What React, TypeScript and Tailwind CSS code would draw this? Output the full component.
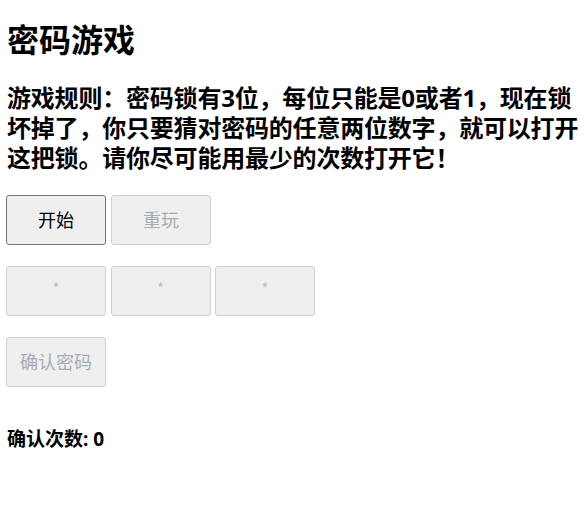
import { useState } from "react";

const font = "font-['Segoe_UI','Noto_Sans','Noto_Sans_CJK_SC',sans-serif]";

const btnBase =
  "w-[100px] h-[50px] rounded-[3px] border bg-[#efefef] text-[18px] leading-none flex items-center justify-center";

export default function App() {
  const [started, setStarted] = useState(false);
  const [count, setCount] = useState(0);

  return (
    <div className={`${font} text-black bg-white min-h-[523px] pl-[7px] pr-[2px] pt-[21px]`}>
      <h1 className="text-[32px] font-bold leading-[38px]">密码游戏</h1>
      <p className="mt-[24px] text-[24px] font-bold leading-[30px] tracking-[-0.2px]">
        游戏规则：密码锁有3位，每位只能是0或者1，现在锁坏掉了，你只要猜对密码的任意两位数字，就可以打开这把锁。请你尽可能用最少的次数打开它！
      </p>

      <div className="mt-[22px] -ml-px flex gap-[5px]">
        <button
          onClick={() => setStarted(true)}
          className={`${btnBase} border-[#767676] text-black`}
        >
          开始
        </button>
        <button disabled={!started} className={`${btnBase} border-[#d0d0d0] text-[#a8acb4]`}>
          重玩
        </button>
      </div>

      <div className="mt-[21px] -ml-px flex gap-[4.5px]">
        {[0, 1, 2].map((i) => (
          <button
            key={i}
            disabled
            className={`${btnBase} border-[#d0d0d0] text-[#b0b4bc] !text-[10px] pb-[10px]`}
          >
            *
          </button>
        ))}
      </div>

      <div className="mt-[21px] -ml-px flex">
        <button
          disabled={!started}
          onClick={() => setCount(count + 1)}
          className={`${btnBase} border-[#d0d0d0] text-[#a8acb4]`}
        >
          确认密码
        </button>
      </div>

      <div className="mt-[40px] text-[19px] font-bold leading-[24px]">确认次数: {count}</div>
    </div>
  );
}
